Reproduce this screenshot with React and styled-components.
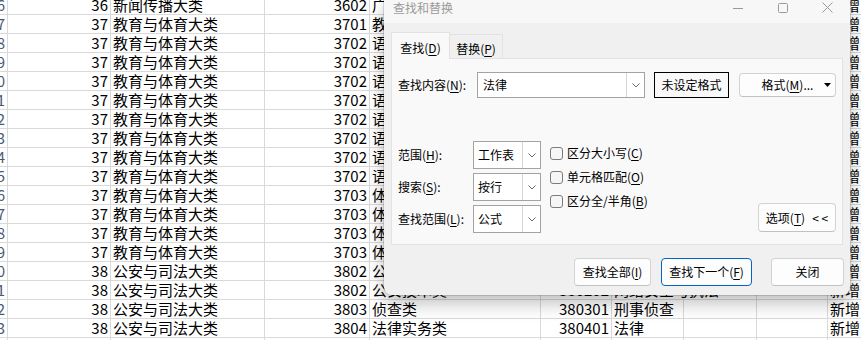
import styled, { createGlobalStyle } from "styled-components";

const GlobalStyle = createGlobalStyle`
  html, body {
    margin: 0;
    padding: 0;
    background: #fff;
  }
  body {
    font-family: "Noto Sans CJK SC", "Noto Sans", sans-serif;
  }
`;

const Screen = styled.div`
  position: relative;
  width: 861px;
  height: 340px;
  overflow: hidden;
  background: #fff;
`;

/* ---------- spreadsheet behind the dialog ---------- */

const Sheet = styled.div`
  display: flex;
  flex-direction: column;
  margin-top: -4px;
`;

const SheetRow = styled.div`
  display: grid;
  grid-template-columns: 8px 103px 154px 105px 171px 71px 72px 73px 71px 80px;
  height: 19px;
`;

const Cell = styled.div`
  box-sizing: border-box;
  display: flex;
  align-items: center;
  justify-content: ${(p) => (p.$num ? "flex-end" : "flex-start")};
  padding: 0 2px;
  border-right: 1px solid #d9d9d9;
  border-bottom: 1px solid #d9d9d9;
  font-size: 15px;
  line-height: 18px;
  color: #000;
  white-space: nowrap;
  overflow: ${(p) => (p.$num ? "hidden" : "visible")};
`;

const RowHead = styled(Cell)`
  justify-content: flex-end;
  padding: 0 2px 0 0;
  overflow: hidden;
  color: #4a5a72;
`;

const sheetRows = [
  ["156", "36", "新闻传播大类", "3602", "广播影视类", "360201", "播音与主持"],
  ["157", "37", "教育与体育大类", "3701", "教育类", "370101", "早期教育"],
  ["158", "37", "教育与体育大类", "3702", "语言类", "370201", "商务英语"],
  ["159", "37", "教育与体育大类", "3702", "语言类", "370202", "应用英语"],
  ["160", "37", "教育与体育大类", "3702", "语言类", "370203", "旅游英语"],
  ["161", "37", "教育与体育大类", "3702", "语言类", "370204", "商务日语"],
  ["162", "37", "教育与体育大类", "3702", "语言类", "370205", "应用日语"],
  ["163", "37", "教育与体育大类", "3702", "语言类", "370206", "旅游日语"],
  ["164", "37", "教育与体育大类", "3702", "语言类", "370207", "应用韩语"],
  ["165", "37", "教育与体育大类", "3702", "语言类", "370208", "应用俄语"],
  ["166", "37", "教育与体育大类", "3703", "体育类", "370301", "运动训练"],
  ["167", "37", "教育与体育大类", "3703", "体育类", "370302", "社会体育"],
  ["168", "37", "教育与体育大类", "3703", "体育类", "370303", "体育保健"],
  ["169", "37", "教育与体育大类", "3703", "体育类", "370304", "电子竞技"],
  ["170", "38", "公安与司法大类", "3802", "公安技术类", "380201", "刑事科学技术"],
  ["171", "38", "公安与司法大类", "3802", "公安技术类", "380202", "网络安全与执法"],
  ["172", "38", "公安与司法大类", "3803", "侦查类", "380301", "刑事侦查"],
  ["173", "38", "公安与司法大类", "3804", "法律实务类", "380401", "法律"],
  ["174", "38", "公安与司法大类", "3804", "法律实务类", "380402", "司法助理"],
];

/* ---------- find & replace dialog ---------- */

const Dialog = styled.div`
  position: absolute;
  left: 384px;
  top: 0;
  width: 466px;
  height: 295px;
  display: flex;
  flex-direction: column;
  background: #f0f0f0;
  border-radius: 0 0 8px 8px;
  box-shadow: 0 0 0 1px rgba(0, 0, 0, 0.13), 0 8px 18px rgba(0, 0, 0, 0.26);
  font-size: 12px;
  line-height: 16px;
  color: #000;
`;

const TitleBar = styled.div`
  display: flex;
  align-items: flex-start;
  height: 23px;
  padding-left: 9px;
  background: #f7f7f7;
`;

const Title = styled.div`
  color: #9a9a9a;
  line-height: 16px;
`;

const Controls = styled.div`
  display: flex;
  margin-left: auto;
`;

const Control = styled.div`
  width: 45px;
  height: 15px;
  display: flex;
  align-items: center;
  justify-content: center;
`;

const Body = styled.div`
  display: flex;
  flex-direction: column;
  padding: 9px 7px 0 7px;
`;

const TabBar = styled.div`
  display: flex;
  align-items: flex-end;
  height: 26px;
`;

const Tab = styled.div`
  box-sizing: border-box;
  display: flex;
  justify-content: center;
  width: ${(p) => p.$w}px;
  height: ${(p) => (p.$active ? 27 : 24)}px;
  margin-bottom: ${(p) => (p.$active ? -1 : 0)}px;
  margin-left: ${(p) => (p.$active ? 0 : -1)}px;
  padding-top: ${(p) => (p.$active ? 7 : 6)}px;
  background: ${(p) => (p.$active ? "#f9f9f9" : "#f0f0f0")};
  border: 1px solid #e2e2e2;
  border-bottom: none;
  position: relative;
  z-index: ${(p) => (p.$active ? 1 : 0)};
`;

const Panel = styled.div`
  box-sizing: border-box;
  height: 187px;
  padding: 13px 6px 0 6px;
  background: #f9f9f9;
  border: 1px solid #e2e2e2;
  display: flex;
  flex-direction: column;
`;

const Key = styled.span`
  text-decoration: underline;
  text-underline-offset: 2px;
`;

const FindRow = styled.div`
  display: flex;
  align-items: center;
  height: 26px;
`;

const Label = styled.div`
  width: ${(p) => p.$w}px;
  flex-shrink: 0;
  white-space: nowrap;
`;

const Combo = styled.div`
  box-sizing: border-box;
  display: flex;
  width: ${(p) => p.$w}px;
  height: ${(p) => p.$h}px;
  background: #fff;
  border: 1px solid #a3a3a3;
`;

const ComboText = styled.div`
  flex: 1;
  display: flex;
  align-items: center;
  padding-left: ${(p) => p.$pad}px;
`;

const ComboArrow = styled.div`
  width: 17px;
  display: flex;
  align-items: center;
  justify-content: center;
  border-left: 1px solid #d6d6d6;
`;

const FormatState = styled.div`
  box-sizing: border-box;
  width: 75px;
  height: 26px;
  margin-left: 9px;
  display: flex;
  align-items: center;
  justify-content: center;
  border: 1px solid #000;
`;

const Button = styled.div`
  box-sizing: border-box;
  width: ${(p) => p.$w}px;
  height: ${(p) => p.$h || 28}px;
  display: flex;
  align-items: center;
  justify-content: center;
  background: #fdfdfd;
  border: 1px solid ${(p) => (p.$primary ? "#0067c0" : "#d3d3d3")};
  border-bottom-color: ${(p) => (p.$primary ? "#0067c0" : "#c2c2c2")};
  border-radius: 4px;
  white-space: nowrap;
`;

const FormatButton = styled(Button)`
  margin-left: 10px;
  display: grid;
  grid-template-columns: 1fr auto 1fr;
  align-items: center;
`;

const FormatArrow = styled.div`
  justify-self: end;
  margin-right: 4px;
  display: flex;
`;

const OptionsArea = styled.div`
  display: flex;
  align-items: flex-start;
  margin-top: 43px;
`;

const FieldGrid = styled.div`
  display: grid;
  grid-template-columns: 75px 68px;
  grid-auto-rows: 28px;
  row-gap: 4px;
  align-items: center;
`;

const CheckList = styled.div`
  display: flex;
  flex-direction: column;
  margin-left: 9px;
`;

const CheckItem = styled.div`
  display: flex;
  align-items: center;
  gap: 4px;
  height: 24px;
`;

const Box = styled.div`
  box-sizing: border-box;
  width: 13px;
  height: 13px;
  border: 1px solid #7c7c7c;
  border-radius: 3px;
  background: #f6f6f6;
`;

const OptionsButton = styled(Button)`
  margin-left: auto;
  margin-bottom: 1px;
  align-self: flex-end;
  gap: 7px;
`;

const Footer = styled.div`
  display: flex;
  justify-content: flex-end;
  margin-top: 13px;
  margin-right: -1px;
`;

const FooterButton = styled(Button)`
  margin-left: ${(p) => p.$gap || 0}px;
`;

const Chevron = () => (
  <svg width="8" height="5" viewBox="0 0 8 5">
    <polyline points="0.5,0.5 4,4 7.5,0.5" fill="none" stroke="#6a6a6a" strokeWidth="1" />
  </svg>
);

const fields = [
  { label: <>范围(<Key>H</Key>):</>, value: "工作表" },
  { label: <>搜索(<Key>S</Key>):</>, value: "按行" },
  { label: <>查找范围(<Key>L</Key>):</>, value: "公式" },
];

const checks = [
  <>区分大小写(<Key>C</Key>)</>,
  <>单元格匹配(<Key>O</Key>)</>,
  <>区分全/半角(<Key>B</Key>)</>,
];

export default function App() {
  return (
    <>
      <GlobalStyle />
      <Screen>
        <Sheet>
          {sheetRows.map((r) => (
            <SheetRow key={r[0]}>
              <RowHead>{r[0]}</RowHead>
              <Cell $num>{r[1]}</Cell>
              <Cell>{r[2]}</Cell>
              <Cell $num>{r[3]}</Cell>
              <Cell>{r[4]}</Cell>
              <Cell $num>{r[5]}</Cell>
              <Cell>{r[6]}</Cell>
              <Cell />
              <Cell />
              <Cell>新增</Cell>
            </SheetRow>
          ))}
        </Sheet>

        <Dialog>
          <TitleBar>
            <Title>查找和替换</Title>
            <Controls>
              <Control>
                <svg width="10" height="10" viewBox="0 0 10 10">
                  <line x1="0" y1="5.5" x2="10" y2="5.5" stroke="#9a9a9a" strokeWidth="1" />
                </svg>
              </Control>
              <Control>
                <svg width="10" height="10" viewBox="0 0 10 10">
                  <rect x="0.5" y="0.5" width="9" height="9" rx="1" fill="none" stroke="#9a9a9a" strokeWidth="1" />
                </svg>
              </Control>
              <Control>
                <svg width="11" height="11" viewBox="0 0 11 11">
                  <path d="M0.5 0.5 L10.5 10.5 M10.5 0.5 L0.5 10.5" stroke="#9a9a9a" strokeWidth="1" />
                </svg>
              </Control>
            </Controls>
          </TitleBar>

          <Body>
            <TabBar>
              <Tab $active $w={59}>查找(<Key>D</Key>)</Tab>
              <Tab $w={54}>替换(<Key>P</Key>)</Tab>
            </TabBar>

            <Panel>
              <FindRow>
                <Label $w={79}>查找内容(<Key>N</Key>):</Label>
                <Combo $w={168} $h={26}>
                  <ComboText $pad={5}>法律</ComboText>
                  <ComboArrow><Chevron /></ComboArrow>
                </Combo>
                <FormatState>未设定格式</FormatState>
                <FormatButton $w={97} $h={24}>
                  <span />
                  <span>格式(<Key>M</Key>)...</span>
                  <FormatArrow>
                    <svg width="7" height="4" viewBox="0 0 7 4">
                      <polygon points="0,0 7,0 3.5,4" fill="#000" />
                    </svg>
                  </FormatArrow>
                </FormatButton>
              </FindRow>

              <OptionsArea>
                <FieldGrid>
                  {fields.map((f, i) => (
                    <FieldPair key={i} label={f.label} value={f.value} />
                  ))}
                </FieldGrid>
                <CheckList>
                  {checks.map((c, i) => (
                    <CheckItem key={i}>
                      <Box />
                      <span>{c}</span>
                    </CheckItem>
                  ))}
                </CheckList>
                <OptionsButton $w={78} $h={29}>
                  <span>选项(<Key>T</Key>)</span>
                  <span>&lt; &lt;</span>
                </OptionsButton>
              </OptionsArea>
            </Panel>

            <Footer>
              <FooterButton $w={77}>查找全部(<Key>I</Key>)</FooterButton>
              <FooterButton $w={91} $gap={10} $primary>查找下一个(<Key>F</Key>)</FooterButton>
              <FooterButton $w={73} $gap={19}>关闭</FooterButton>
            </Footer>
          </Body>
        </Dialog>
      </Screen>
    </>
  );
}

function FieldPair({ label, value }) {
  return (
    <>
      <Label $w={75}>{label}</Label>
      <Combo $w={68} $h={28}>
        <ComboText $pad={4}>{value}</ComboText>
        <ComboArrow><Chevron /></ComboArrow>
      </Combo>
    </>
  );
}
